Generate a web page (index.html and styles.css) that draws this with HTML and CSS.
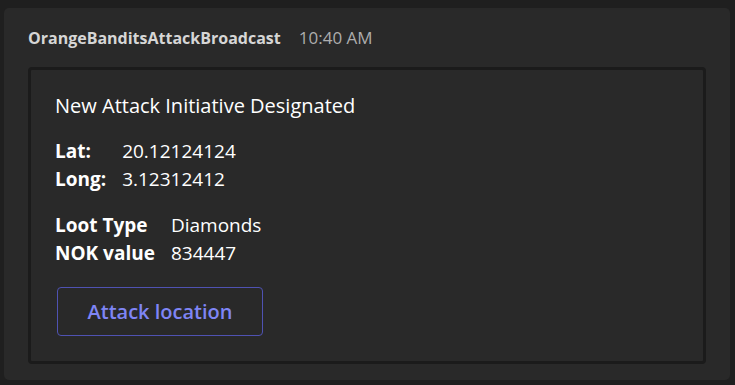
FILE: index.html
```html
<!DOCTYPE html>
<html lang="en">
<head>
<meta charset="utf-8">
<title>OrangeBanditsAttackBroadcast</title>
<link rel="stylesheet" href="styles.css">
</head>
<body>
<div class="message">
  <div class="message-header">
    <span class="sender">OrangeBanditsAttackBroadcast</span>
    <span class="time">10:40 AM</span>
  </div>
  <div class="card">
    <div class="card-title">New Attack Initiative Designated</div>
    <div class="factset">
      <div class="fact-title">Lat:</div><div class="fact-value">20.12124124</div>
      <div class="fact-title">Long:</div><div class="fact-value">3.12312412</div>
    </div>
    <div class="factset">
      <div class="fact-title">Loot Type</div><div class="fact-value">Diamonds</div>
      <div class="fact-title">NOK value</div><div class="fact-value">834447</div>
    </div>
    <div class="actions">
      <button class="action-btn" type="button">Attack location</button>
    </div>
  </div>
</div>
</body>
</html>
```
FILE: styles.css
```css
html, body {
  margin: 0;
  background: #1f1f1f;
}
body {
  padding: 8px 5px 5px 4px;
  font-family: "Open Sans", "Noto Sans", sans-serif;
  color: #ffffff;
}
.message {
  background: #292929;
  border-radius: 5px;
  padding: 20px 24px 16px 24px;
  height: 372px;
  box-sizing: border-box;
}
.message-header {
  display: flex;
  align-items: baseline;
  gap: 18px;
  font-size: 16px;
  line-height: 20px;
  margin-bottom: 19px;
}
.sender {
  font-weight: 700;
  color: #d6d6d6;
}
.time {
  font-size: 17px;
  color: #adadad;
}
.card {
  border: 3px solid #1b1b1b;
  border-radius: 4px;
  padding: 22px 24px 0 24px;
  height: 297px;
  box-sizing: border-box;
  font-size: 19px;
  line-height: 27px;
}
.card-title {
  font-size: 20px;
  margin-bottom: 19px;
}
.factset {
  display: grid;
  grid-template-columns: max-content auto;
  column-gap: 16px;
  row-gap: 1px;
  margin-bottom: 19px;
}
.fact-title {
  font-weight: 700;
}
.actions {
  padding-top: 1px;
  padding-left: 2px;
}
.action-btn {
  font-family: inherit;
  width: 206px;
  height: 49px;
  background: transparent;
  border: 1px solid #4f52b2;
  border-radius: 4px;
  color: #7f85f5;
  font-size: 20px;
  font-weight: 600;
  padding: 0;
}
```
